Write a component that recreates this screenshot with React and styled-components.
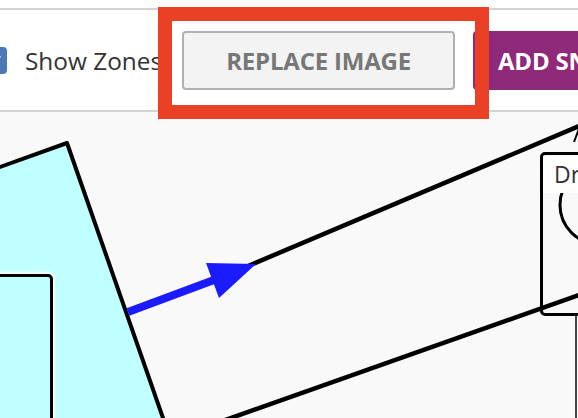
import React from 'react';
import styled, { createGlobalStyle } from 'styled-components';

const GlobalStyle = createGlobalStyle`
  html, body {
    margin: 0;
    padding: 0;
    background: #fff;
    overflow: hidden;
    font-family: 'Open Sans', 'Liberation Sans', sans-serif;
  }
`;

const Page = styled.div`
  position: relative;
  width: 578px;
  height: 418px;
  overflow: hidden;
`;

const Toolbar = styled.div`
  margin-top: 8px;
  height: 100px;
  border-top: 2px solid #d2d2d2;
  border-bottom: 2px solid #d2d2d2;
  background: #fff;
  display: flex;
  align-items: center;
  gap: 20px;
  white-space: nowrap;
`;

const Checkbox = styled.span`
  flex-shrink: 0;
  width: 25px;
  height: 27px;
  margin-left: -18px;
  border-radius: 4px;
  background: #4a79b4;
  display: flex;
  align-items: center;
  justify-content: center;
`;

const ToggleLabel = styled.span`
  flex-shrink: 0;
  margin-left: -2px;
  font-size: 24.4px;
  color: #333;
`;

const Button = styled.button`
  flex-shrink: 0;
  height: 59px;
  margin-left: ${({ $primary }) => ($primary ? '-2px' : '0')};
  padding: 0 ${({ $primary }) => ($primary ? '23px' : '42px')};
  box-sizing: border-box;
  border-radius: 4px;
  border: ${({ $primary }) => ($primary ? '2px solid #8f2a7b' : '2px solid #b0b0b0')};
  background: ${({ $primary }) => ($primary ? '#8f2a7b' : '#f3f3f3')};
  color: ${({ $primary }) => ($primary ? '#fff' : '#777')};
  font-family: 'Open Sans', 'Liberation Sans', sans-serif;
  font-weight: 700;
  font-size: 24px;
  letter-spacing: -0.2px;
`;

const Highlight = styled.div`
  position: absolute;
  left: 158px;
  top: 7px;
  width: 331px;
  height: 112px;
  box-sizing: border-box;
  border: 14px solid #ea4026;
  pointer-events: none;
`;

const Canvas = styled.div`
  position: relative;
  height: 306px;
  background: #f9f9f9;
  overflow: hidden;

  svg {
    display: block;
  }
`;

const Zone = styled.div`
  position: absolute;
  left: -40px;
  top: 162px;
  width: 93px;
  height: 200px;
  box-sizing: border-box;
  border: 3.5px solid #000;
  border-radius: 5px;
  background: #c0ffff;
  box-shadow: 0 0 3px 2px #fff;
`;

const Node = styled.div`
  position: absolute;
  left: 540px;
  top: 40px;
  width: 90px;
  height: 164px;
  box-sizing: border-box;
  border: 3.5px solid #000;
  border-radius: 5px;
`;

const NodeLabel = styled.div`
  margin-top: 1px;
  height: 37px;
  padding-left: 11px;
  background: #fff;
  font-size: 23px;
  line-height: 37px;
  color: #333;
`;

function Check() {
  return (
    <svg width="16" height="16" viewBox="0 0 16 16">
      <path d="M3 8.5 L6.5 12 L13 4" fill="none" stroke="#fff" strokeWidth="2.5" />
    </svg>
  );
}

function Diagram() {
  return (
    <svg width="578" height="306" viewBox="0 112 578 306">
      <polygon
        points="67,143 -134,215 58,765 259,693"
        fill="#c0ffff"
        stroke="#000"
        strokeWidth="4"
        strokeLinejoin="round"
      />
      <line x1="248" y1="266" x2="610" y2="113" stroke="#000" strokeWidth="4.5" />
      <line x1="180" y1="436" x2="610" y2="284" stroke="#000" strokeWidth="4.5" />
      <line x1="128" y1="312" x2="222" y2="277" stroke="#1a1cff" strokeWidth="8" />
      <polygon points="256,264 206,263 219,298" fill="#1a1cff" />
      <circle cx="599" cy="205" r="39" fill="none" stroke="#000" strokeWidth="3" />
      <line x1="574" y1="142" x2="580" y2="126" stroke="#000" strokeWidth="2" />
      <line x1="576" y1="314" x2="576" y2="420" stroke="#444" strokeWidth="2" />
    </svg>
  );
}

export default function App() {
  return (
    <Page>
      <GlobalStyle />
      <Toolbar>
        <Checkbox>
          <Check />
        </Checkbox>
        <ToggleLabel>Show Zones</ToggleLabel>
        <Button>REPLACE IMAGE</Button>
        <Button $primary>ADD SNAPSHOT</Button>
      </Toolbar>
      <Canvas>
        <Diagram />
        <Zone />
        <Node>
          <NodeLabel>Drag</NodeLabel>
        </Node>
      </Canvas>
      <Highlight />
    </Page>
  );
}
